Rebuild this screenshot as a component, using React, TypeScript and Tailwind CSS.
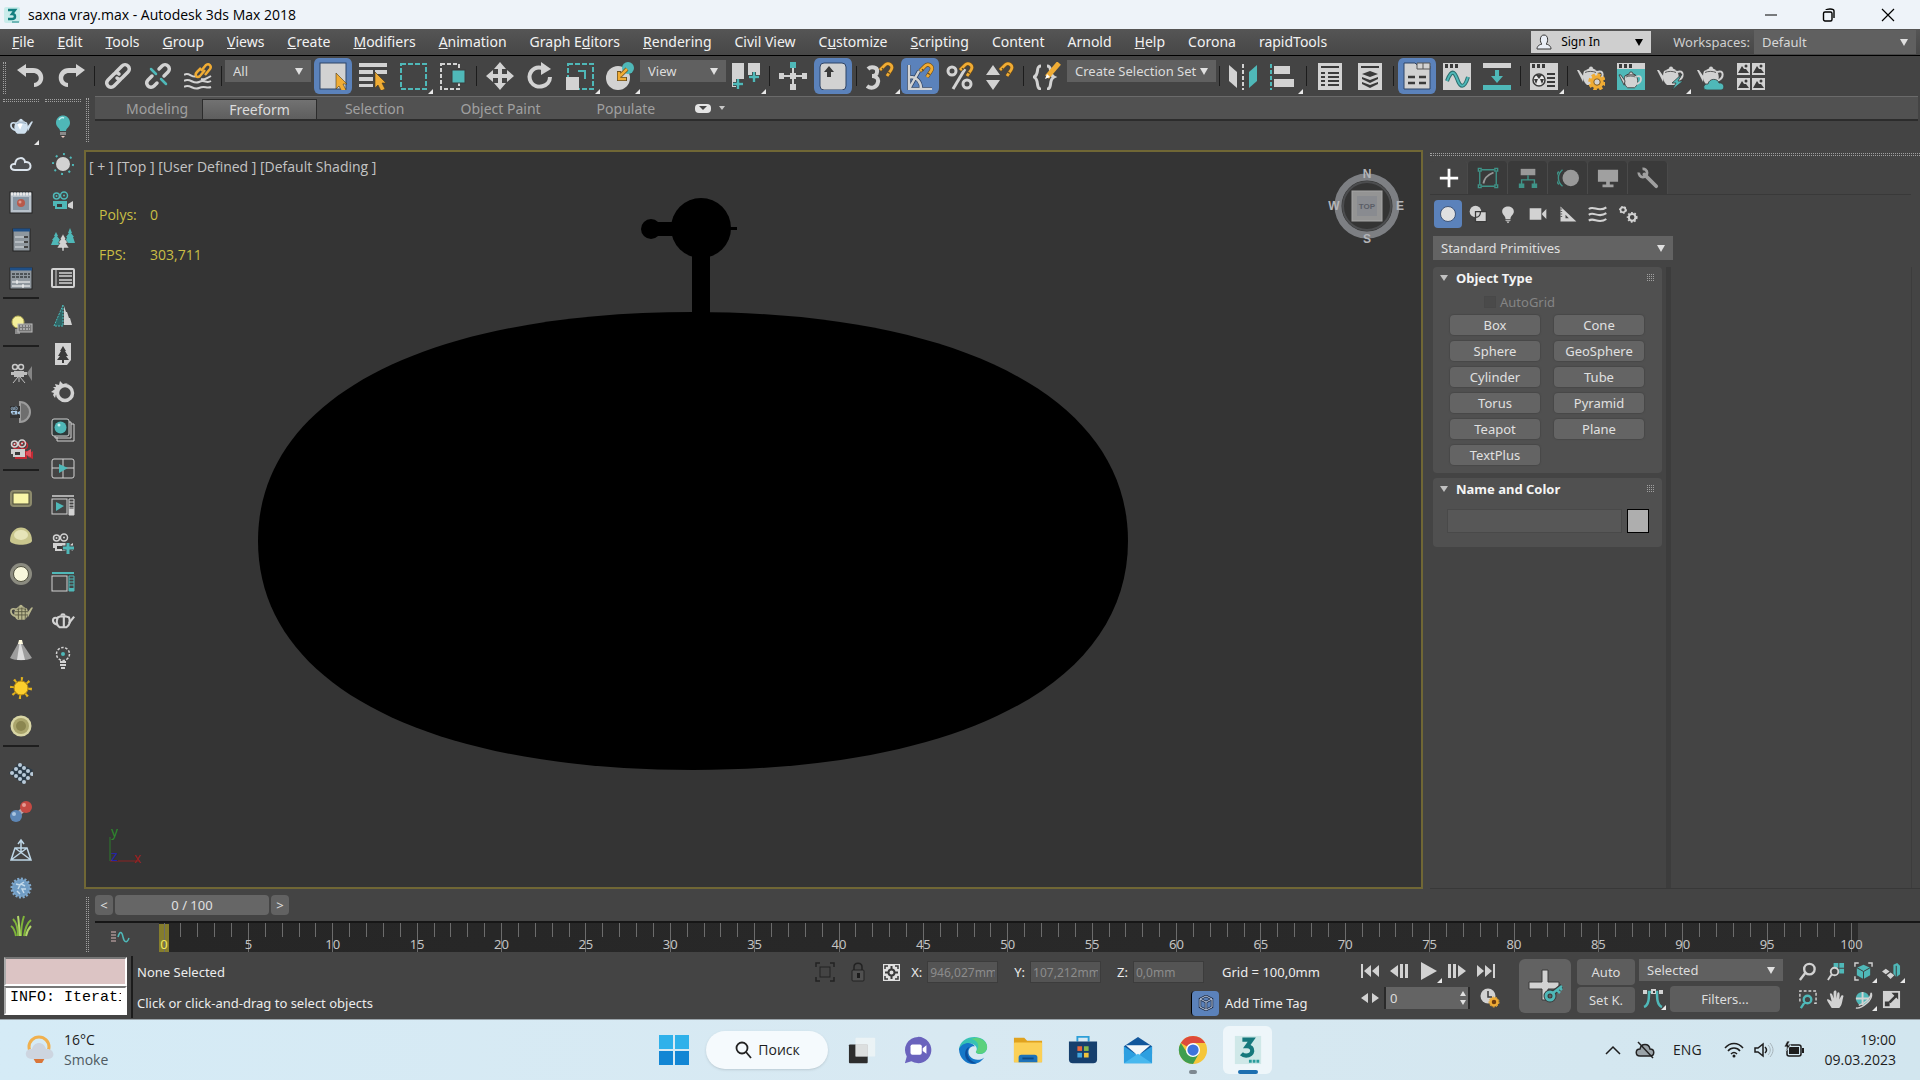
import * as React from "react";
import { clsx } from "clsx";

const L = "#d2d2d2";
const T = "#4fb8b8";
const O = "#f0ac34";
const D = "#3a3a3a";

interface SvgProps {
  size?: number;
  box?: number;
  children: React.ReactNode;
}

function Svg({ size = 28, box = 28, children }: SvgProps) {
  return (
    <svg width={size} height={size} viewBox={`0 0 ${box} ${box}`} fill="none" className="shrink-0" aria-hidden="true">
      {children}
    </svg>
  );
}

/* Shared drawings */

function TeapotShape({ fill = L, stroke = "none", lid = D }: { fill?: string; stroke?: string; lid?: string }) {
  return (
    <g fill={fill} stroke={stroke}>
      <path d="M7 9C11 7 17 7 20 9C23 14 22 20 18 23H10C6 20 5 14 7 9Z" />
      <path d="M12 6.500a2 2 0 0 1 4 0l3 1.500H9Z" />
      <path d="M7 15L2 8H0L6 20Z" />
      <path d="M20 10C27 7 28 16 20 19" fill="none" stroke={fill} strokeWidth="2" />
      <path d="M8 10.500C11 9 16 9 19 10.500" fill="none" stroke={lid} strokeWidth="0.8" />
    </g>
  );
}

function CameraShape({ body = T, reel = T, lens = L }: { body?: string; reel?: string; lens?: string }) {
  return (
    <g>
      <circle cx="5.500" cy="6" r="3" stroke={reel} strokeWidth="1.500" />
      <circle cx="13" cy="5.500" r="3.500" stroke={reel} strokeWidth="1.500" />
      <circle cx="5.500" cy="6" r="1" fill={reel} />
      <circle cx="13" cy="5.500" r="1" fill={reel} />
      <path d="M2 11H16V19H4V16H2Z" fill={body} />
      <rect x="6" y="14" width="5" height="3" fill={D} />
      <path d="M17 14L22 11V19L17 17Z" fill={lens} />
    </g>
  );
}

function Magnet({ x = 0, y = 0 }: { x?: number; y?: number }) {
  return (
    <g transform={`translate(${x} ${y})`}>
      <path d="M0 8L5 3C8 0 14 3 11 8L7 14" stroke="#6b4c1c" strokeWidth="4" />
      <path d="M0 8L5 3C8 0 14 3 11 8L7 14" stroke={O} strokeWidth="2.800" />
      <path d="M2 6L3.500 8M7.500 10L10 11.500" stroke="#5a4a2a" strokeWidth="1.200" />
    </g>
  );
}

function WindowTop({ bg = L }: { bg?: string }) {
  return (
    <g>
      <rect x="0" y="1" width="28" height="27" fill={bg} />
      <rect x="0" y="1" width="28" height="6" fill={L} />
      <path d="M2 2h3v4h-3zM7 2h3v4h-3zM12 2h3v4h-3z" fill={D} />
    </g>
  );
}

const cursor = <path d="M0 0L11 11H7L10 17L6 19L3 13L0 16Z" fill={O} stroke="#4a3a1a" strokeWidth="0.6" />;

const toolIcons: Record<string, React.ReactNode> = {
  undo: <path d="M0 8L9 2V6H16C29 6 30 24 17 25V21C24 20 23 11 16 11H9V15Z" fill={L} />,
  redo: <path d="M28 8L19 2V6H12C-1 6 -2 24 11 25V21C4 20 5 11 12 11H19V15Z" fill={L} />,
  link: (
    <g stroke={L} strokeWidth="3.500" strokeLinecap="round">
      <path d="M12 10L18 4C22 0 28 6 24 10L18 16C16 18 14 17 13 16" />
      <path d="M16 18L10 24C6 28 0 22 4 18L10 12C12 10 14 11 15 12" />
    </g>
  ),
  unlink: (
    <g strokeWidth="3.500" strokeLinecap="round">
      <path d="M15 7L18 4C22 0 28 6 24 10L20 14" stroke={L} />
      <path d="M13 21L10 24C6 28 0 22 4 18L8 14" stroke={L} />
      <path d="M7 7L12 12M17 17L22 22" stroke={T} strokeWidth="2.500" />
    </g>
  ),
  bind: (
    <g>
      <path d="M0 13C5 9 8 17 13 14M17 17C20 18 22 17 27 14M0 19C6 15 9 23 15 20S22 22 27 19M0 25C6 21 9 29 15 26S22 27 27 25" stroke={L} strokeWidth="2" />
      <path d="M17 9L22 3C25 1 28 4 26 7L21 13" stroke={O} strokeWidth="2.500" />
      <path d="M21 8L16 14C13 17 10 13 13 10L17 6" stroke={O} strokeWidth="2.500" />
    </g>
  ),
  select: (
    <g>
      <rect x="1" y="1" width="26" height="26" fill={L} stroke="#2f4467" />
      <g transform="translate(17 11)">{cursor}</g>
    </g>
  ),
  byName: (
    <g>
      <path d="M0 1h28v4h-28zM0 8h14v4h-14zM0 15h14v4h-14zM0 22h14v3h-14zM16 8h12v4h-12z" fill={L} />
      <g transform="translate(16 10)">{cursor}</g>
    </g>
  ),
  rect: <rect x="2" y="2" width="25" height="25" stroke={T} strokeWidth="2" strokeDasharray="5 2" />,
  crossing: (
    <g>
      <rect x="2" y="2" width="18" height="25" stroke={L} strokeWidth="2" strokeDasharray="4 2" />
      <rect x="13" y="8" width="13" height="13" fill={T} stroke={D} />
    </g>
  ),
  move: <path d="M14 0L20 7H16V12H21V8L28 14L21 20V16H16V21H20L14 28L8 21H12V16H7V20L0 14L7 8V12H12V7H8Z" fill={L} />,
  rotate: (
    <g>
      <path d="M17 6C6 3 1 13 5 20C10 28 24 25 24 15" stroke={L} strokeWidth="4" />
      <path d="M15 0L25 7L15 13Z" fill={L} />
    </g>
  ),
  scale: (
    <g>
      <rect x="2" y="2" width="25" height="25" stroke={T} strokeWidth="2" strokeDasharray="5 2" />
      <rect x="0" y="15" width="13" height="13" fill={L} />
      <path d="M12 9H19V17" stroke={T} strokeWidth="2" />
    </g>
  ),
  place: (
    <g>
      <circle cx="12" cy="16" r="12" fill={L} />
      <circle cx="22" cy="6" r="6" fill={T} />
      <path d="M21 7L14 14M13 9V17H21" stroke="#6b5120" strokeWidth="4" />
      <path d="M21 7L14 14M13 10V17H20" stroke={O} strokeWidth="2.500" />
    </g>
  ),
  pivot: (
    <g>
      <path d="M0 1H12V17H8V25H0ZM16 1H28V13H16Z" fill={L} />
      <path d="M6 17V27M1 22H11M22 10V20M17 15H27" stroke={D} strokeWidth="4" />
      <path d="M6 17V27M1 22H11M22 10V20M17 15H27" stroke={T} strokeWidth="2.500" />
    </g>
  ),
  manip: (
    <g>
      <path d="M14 6V25M2 14H26" stroke={L} strokeWidth="2" />
      <path d="M11 11h6v6h-6zM0 11h5v6h-5zM23 11h5v6h-5zM11 22h6v6h-6z" fill={L} />
      <rect x="11" y="0" width="6" height="6" fill={T} />
    </g>
  ),
  keyboard: (
    <g>
      <rect x="1" y="1" width="26" height="27" rx="4" fill={L} stroke="#2f4467" />
      <path d="M10 4L15 10H12V15H8V10H5Z" fill={D} />
    </g>
  ),
  snap: (
    <g>
      <path d="M2 7C5 4 12 5 11 10C11 13 8 14 6 14C9 14 13 16 12 20C11 26 5 27 1 24" stroke={L} strokeWidth="4" />
      <Magnet x={14} />
    </g>
  ),
  angle: (
    <g>
      <path d="M3 3V27H26M3 27L13 9M4 15C11 15 15 20 15 27" stroke="#2f4467" strokeWidth="4" />
      <path d="M3 3V27H26M3 27L13 9M4 15C11 15 15 20 15 27" stroke={L} strokeWidth="2.500" />
      <Magnet x={14} y={1} />
    </g>
  ),
  percent: (
    <g>
      <circle cx="6" cy="9" r="4" stroke={L} strokeWidth="3" />
      <circle cx="21" cy="22" r="4" stroke={L} strokeWidth="3" />
      <path d="M19 7L7 27" stroke={L} strokeWidth="3" />
      <Magnet x={14} />
    </g>
  ),
  spinner: (
    <g>
      <path d="M7 3L14 13H0ZM0 18H14L7 28Z" fill={L} />
      <Magnet x={14} />
    </g>
  ),
  braces: (
    <g>
      <path d="M8 4C2 4 7 12 1 15C7 18 2 27 8 27M14 4C20 4 15 12 21 15C15 18 20 27 14 27" stroke={L} strokeWidth="3" />
      <path d="M14 15L26 1" stroke={O} strokeWidth="5" />
      <path d="M14 12L12 17L17 15Z" fill="#fff" />
    </g>
  ),
  mirror: (
    <g>
      <path d="M0 3L8 10V26L0 19Z" fill={L} />
      <path d="M28 3L20 10V26L28 19Z" fill={T} />
      <path d="M14 2V28" stroke={L} strokeWidth="2" strokeDasharray="4 2" />
    </g>
  ),
  align: (
    <g>
      <path d="M2 2V28" stroke={T} strokeWidth="2" strokeDasharray="4 2" />
      <path d="M5 4h16v8h-16zM5 17h20v8h-20z" fill={L} />
    </g>
  ),
  layers: (
    <g>
      <rect x="2" y="1" width="24" height="27" fill={L} />
      <path d="M5 5H23M5 11H9M12 11H23M5 15H9M12 15H23M5 19H9M12 19H23M5 23H9M12 23H23" stroke={D} strokeWidth="2" />
    </g>
  ),
  stack: (
    <g>
      <rect x="2" y="1" width="24" height="27" fill={L} />
      <path d="M5 5H23" stroke={D} strokeWidth="2" />
      <path d="M14 9L22 12L14 15L6 12ZM6 15L14 18L22 15V17L14 21L6 17ZM6 20L14 23L22 20V22L14 26L6 22Z" fill={D} />
    </g>
  ),
  ribbon: (
    <g>
      <path d="M1 1H12L15 4H27V27H1Z" fill={L} stroke="#2f4467" />
      <path d="M14 1H27V7H14ZM20 1V7" stroke="#555" fill={L} />
      <path d="M5 15H12M16 15H23M5 21H12M16 21H23" stroke={D} strokeWidth="2.500" />
    </g>
  ),
  curve: (
    <g>
      <WindowTop />
      <path d="M4 19C10 3 13 14 15 19S21 28 25 15" stroke="#2c6f6f" strokeWidth="4" />
      <path d="M4 19C10 3 13 14 15 19S21 28 25 15" stroke={T} strokeWidth="2" />
    </g>
  ),
  schematic: (
    <g>
      <path d="M0 1h28v5h-28z" fill={L} />
      <path d="M0 23h28v5h-28zM12 8h4v6h4l-6 7l-6 -7h4z" fill={T} />
    </g>
  ),
  material: (
    <g>
      <WindowTop />
      <circle cx="9" cy="18" r="6" fill="#e8e8e8" stroke={D} strokeWidth="1.500" />
      <path d="M6 13L9 17L12 13ZM4 17H8L6 22ZM14 17H10L12 22Z" fill={D} />
      <path d="M17 12H25M17 16H25M17 20H25M17 24H25" stroke={D} strokeWidth="2" />
    </g>
  ),
  renderSetup: (
    <g>
      <TeapotShape />
      <circle cx="20" cy="20" r="7.500" stroke={O} strokeWidth="2.500" strokeDasharray="3.500 2.400" />
      <circle cx="20" cy="20" r="5" stroke={O} strokeWidth="3.500" />
      <circle cx="20" cy="20" r="3.200" fill={L} stroke="#8a5c14" />
    </g>
  ),
  frame: (
    <g>
      <WindowTop bg={T} />
      <g transform="translate(2 6) scale(0.86)">
        <TeapotShape stroke={D} />
      </g>
    </g>
  ),
  render: (
    <g>
      <TeapotShape />
      <path d="M25 12L15 21H19L15 28L26 19H21Z" fill={T} stroke={D} strokeWidth="0.800" />
    </g>
  ),
  cloud: (
    <g>
      <TeapotShape />
      <path d="M10 28C5 28 6 21 11 22C12 16 21 16 22 21C28 20 28 28 24 28Z" fill={T} stroke={D} strokeWidth="0.800" />
    </g>
  ),
  gallery: (
    <g>
      {[0, 15].map((x) =>
        [1, 16].map((y) => (
          <g key={`${x}-${y}`} transform={`translate(${x} ${y})`}>
            <rect width="13" height="12" fill={L} />
            <path d="M1 10L5 3L7 6L9 6L12 10Z" fill={D} />
            <circle cx="9" cy="3" r="1.500" fill={D} />
          </g>
        ))
      )}
    </g>
  ),
};

const vrayIcons: Record<string, React.ReactNode> = {
  teapot: (
    <g transform="translate(24 1) scale(-0.86 0.82)">
      <TeapotShape fill="#cfe0ee" lid="#7d93a8" />
      <path d="M12 11C14 10 17 10 18 12L15 18Z" fill="#fff" />
    </g>
  ),
  cloud: <path d="M6 18C0 18 1 11 6 12C7 4 16 5 16 10C23 9 23 18 18 18Z" fill="#4c4f52" stroke="#dbe4ec" strokeWidth="2" />,
  frame: (
    <g>
      <rect x="1" y="2" width="22" height="21" fill="#b9c2cb" stroke="#222" />
      <path d="M2 4H22" stroke="#e8e8e8" strokeWidth="3" strokeDasharray="2 1" />
      <rect x="4" y="7" width="16" height="13" fill="#8796a4" />
      <circle cx="12" cy="13" r="4" fill="#b8594a" />
      <circle cx="11" cy="12" r="1.500" fill="#dc9a90" />
    </g>
  ),
  list: (
    <g>
      <rect x="4" y="1" width="17" height="22" fill="#8f979e" stroke="#222" />
      <path d="M4 2H21" stroke="#1f4f86" strokeWidth="3" />
      <path d="M6 9H19M6 14H19M6 19H19" stroke="#d8dde1" />
      <path d="M15 9H19M15 14H19M15 19H19" stroke="#444" strokeWidth="2" />
    </g>
  ),
  sliders: (
    <g>
      <rect x="1" y="2" width="22" height="21" fill="#8f979e" stroke="#222" />
      <path d="M1 3H23" stroke="#1f4f86" strokeWidth="3" />
      <path d="M3 8H21M3 11H21" stroke="#4d5357" strokeWidth="2" strokeDasharray="3 1" />
      <path d="M3 16H21M3 20H21M8 14V18M14 18V22" stroke="#fff" />
    </g>
  ),
  bulbPanel: (
    <g>
      <circle cx="9" cy="8" r="6" fill="#f4ef9a" stroke="#b8b05a" />
      <path d="M6 15h5v5h-5z" fill="#8a8a8a" />
      <rect x="9" y="10" width="14" height="8" fill="#777" stroke="#bbb" />
      <path d="M11 12h10M11 15h10" stroke="#ddd" strokeDasharray="2 1" />
    </g>
  ),
  camera: (
    <g>
      <circle cx="6" cy="5" r="2.500" stroke="#c9c9c9" strokeWidth="1.500" />
      <circle cx="12" cy="5" r="2.500" stroke="#c9c9c9" strokeWidth="1.500" />
      <path d="M5 9h10v6h-10zM2 10h3v3h-3zM15 10h3v3h-3z" fill="#bdbdbd" />
      <path d="M23 4V19L18 11Z" fill="#858585" />
      <path d="M9 15L4 21M10 15V20M11 15L16 21" stroke="#bdbdbd" />
    </g>
  ),
  dome: (
    <g>
      <path d="M11 2A10 10 0 0 1 11 22Z" fill="#6e6e6e" stroke="#9c9c9c" strokeWidth="2" />
      <rect x="1" y="6" width="10" height="12" fill="#333" />
      <g transform="translate(1 6) scale(0.45)">
        <CameraShape body="#a9cbe8" reel="#a9cbe8" lens="#a9cbe8" />
      </g>
    </g>
  ),
  redCamera: (
    <g>
      <g transform="translate(2 2)">
        <CameraShape body="#c22a34" reel="#c22a34" lens="#c22a34" />
      </g>
      <CameraShape body="#cfcfcf" reel="#d5d5d5" lens="#e05560" />
    </g>
  ),
  plane: (
    <g>
      <rect x="1" y="4" width="22" height="17" rx="4" fill="#8d8b6c" />
      <rect x="4" y="7" width="16" height="11" fill="#f9f6a8" stroke="#4a4a35" />
    </g>
  ),
  domeLight: (
    <g>
      <path d="M1 17C1 -1 23 -1 23 17C21 22 3 22 1 17Z" fill="#c9c68d" />
      <ellipse cx="12" cy="11" rx="7" ry="5" fill="#e6e4b8" />
    </g>
  ),
  sphereLight: (
    <g>
      <circle cx="12" cy="12" r="11" fill="#8b8b80" />
      <circle cx="12" cy="12" r="7.500" fill="#f8f7dc" stroke="#50503f" />
    </g>
  ),
  meshTeapot: (
    <g transform="translate(24 1) scale(-0.86 0.82)">
      <TeapotShape fill="#b9b78e" lid="#55543e" />
      <path d="M9 9V22M13 8V23M17 9V22M6 13H21M6 17H21" stroke="#55543e" />
    </g>
  ),
  cone: (
    <g>
      <path d="M11 2L23 20C18 23 6 23 1 20Z" fill="#9d9d9d" />
      <path d="M11 2L16 22H8Z" fill="#dcdcdc" />
      <path d="M10 2H13L14 6H9Z" fill="#fffbe0" />
    </g>
  ),
  sun: (
    <g>
      <circle cx="12" cy="12" r="9" stroke="#e2b21c" strokeWidth="4" strokeDasharray="2 5" />
      <circle cx="12" cy="12" r="7" fill="#fbce2c" stroke="#b88a10" />
    </g>
  ),
  disc: (
    <g>
      <circle cx="12" cy="12" r="10.500" fill="#d9d6a5" />
      <circle cx="12" cy="12" r="8" fill="#aaa56c" />
      <circle cx="12" cy="12" r="5" fill="#8b8650" />
    </g>
  ),
  grid: (
    <g>
      <path d="M10 1L24 8L14 22L0 11Z" fill="#2b3b48" />
      <g fill="#b9cad9">
        {[0, 1, 2, 3].map((r) =>
          [0, 1, 2].map((c) => <circle key={`${r}-${c}`} cx={3 + c * 4 + r * 4} cy={11 - c * 4 + r * 3} r="2" />)
        )}
      </g>
    </g>
  ),
  molecule: (
    <g>
      <path d="M7 16L16 8" stroke="#b7a5ad" strokeWidth="5" />
      <circle cx="7" cy="16" r="6" fill="#5d86b5" />
      <circle cx="17" cy="7" r="6" fill="#c44a43" />
      <circle cx="15" cy="5" r="2" fill="#e59a92" />
      <circle cx="5" cy="14" r="2" fill="#a9c5e0" />
    </g>
  ),
  pyramid: (
    <path d="M6 10H18L22 22H2ZM6 10L22 22M18 10L2 22M12 15V3M9 6L12 2L15 6" stroke="#bdd6e6" strokeWidth="1.500" />
  ),
  fur: (
    <g>
      <circle cx="12" cy="12" r="9" fill="#6f9cc4" stroke="#7fa8cc" strokeWidth="3" strokeDasharray="2 1.500" />
      <path d="M7 8L11 9L9 13M15 6L12 8L16 10M17 13L13 13L15 17M8 15L11 18" stroke="#c2d9ea" strokeWidth="1.500" />
    </g>
  ),
  grass: (
    <g strokeWidth="2">
      <path d="M12 22C12 14 13 8 15 2M9 22C9 15 8 9 4 5M15 22C16 15 18 9 22 6M7 22C6 17 5 14 2 12" stroke="#7fb53a" />
      <path d="M11 22C10 14 10 8 9 2M17 22C18 17 20 14 22 12" stroke="#b2d66a" />
    </g>
  ),
};

const coronaIcons: Record<string, React.ReactNode> = {
  bulb: (
    <g>
      <path d="M5 9C5 -1 19 -1 19 9C19 13 15 14 15 17H9C9 14 5 13 5 9Z" fill={T} />
      <path d="M9 18h6v3h-6z" fill="#8a8a8a" />
      <path d="M10 22h4l-2 2z" fill="#e8c8c0" />
      <path d="M8 6C9 4 11 3 13 4" stroke="#bff0ee" strokeWidth="1.500" />
    </g>
  ),
  sun: (
    <g>
      <circle cx="12" cy="12" r="7" fill={L} />
      <circle cx="12" cy="12" r="10" stroke={T} strokeWidth="2" strokeDasharray="2 5.800" />
    </g>
  ),
  camera: <CameraShape />,
  trees: (
    <g>
      <path d="M5 4L7 8H6L9 12H8L10 17H0L2 12H1L4 8H3ZM19 0L21 5H20L23 9H22L24 15H14L16 9H15L18 5H17Z" fill={T} />
      <path d="M12 6L15 11H14L17 15H15L18 20H13V23H11V20H6L9 15H7L10 11H9Z" fill={L} stroke={D} strokeWidth="0.500" />
    </g>
  ),
  table: (
    <g>
      <rect x="1" y="3" width="22" height="18" rx="1" stroke={L} strokeWidth="2" />
      <path d="M5 4V20" stroke={L} />
      <path d="M8 7H21M8 10H21M8 14H21M8 17H21" stroke={L} strokeWidth="1.500" />
    </g>
  ),
  proxy: (
    <g>
      <path d="M12 1V22H3Z" fill="#2f6666" stroke={T} strokeDasharray="2 1" />
      <path d="M13 2L15 8H16L18 14H19L21 21H13Z" fill={L} />
    </g>
  ),
  card: (
    <g>
      <path d="M4 1H20V18L16 23H4Z" fill={L} />
      <path d="M12 4L15 9H14L17 14H15L18 18H13V21H11V18H6L9 14H7L10 9H9Z" fill={D} />
    </g>
  ),
  corona: (
    <g>
      <circle cx="14" cy="13" r="7.500" stroke={L} strokeWidth="3.500" />
      <path d="M4 4L8 5L9 1L12 4L17 3L10 7L6 11L4 18L2 15L3 13L0 12L4 9L2 7L5 7Z" fill={L} />
    </g>
  ),
  library: (
    <g stroke={L}>
      <path d="M6 19V23H23V6H20M4 18V20H20V4H18" />
      <rect x="1" y="1" width="17" height="17" rx="2" fill="#2e3a3a" />
      <circle cx="9.500" cy="9.500" r="6" fill={T} stroke="none" />
      <circle cx="8" cy="7" r="1.500" fill="#c8f2f0" stroke="none" />
    </g>
  ),
  cross: (
    <g>
      <rect x="1" y="3" width="22" height="19" rx="2" stroke={L} />
      <path d="M12 3V22M1 12H23" stroke={L} />
      <path d="M8 8L17 12L8 17Z" fill={T} />
    </g>
  ),
  play: (
    <g>
      <path d="M1 2H23" stroke={L} strokeWidth="1.500" />
      <rect x="1" y="5" width="15" height="15" stroke={L} />
      <path d="M5 8L13 12L5 17Z" fill={T} />
      <path d="M18 5h5v16h-5zM18 8h5M18 11h5M18 14h5" stroke={L} />
      <path d="M18 15h5v6h-5z" fill={L} />
    </g>
  ),
  cameraPlus: (
    <g>
      <CameraShape body={L} reel={L} />
      <path d="M17 10V22M11 16H23" stroke="#444" strokeWidth="5" />
      <path d="M17 11V22M12 16H23" stroke={T} strokeWidth="3" />
    </g>
  ),
  panel: (
    <g>
      <path d="M1 3H23" stroke={T} strokeWidth="2" />
      <rect x="1" y="6" width="15" height="15" stroke={L} />
      <path d="M18 6h5v15h-5zM18 9h5M18 12h5M18 15h5" stroke={T} />
      <path d="M18 18h5v3h-5z" fill={T} />
    </g>
  ),
  wireTeapot: (
    <g transform="translate(24 2) scale(-0.86 0.82)">
      <path d="M7 9C11 7 17 7 20 9C22 14 22 18 18 21H10C6 18 5 14 7 9ZM13 8V21" stroke={L} strokeWidth="2.500" />
      <path d="M12 7a2 2 0 0 1 4 0" stroke={L} strokeWidth="2" />
      <path d="M7 16L1 8M20 10C27 7 28 16 20 18" stroke={L} strokeWidth="2.500" />
    </g>
  ),
  dotBulb: (
    <g>
      <circle cx="12" cy="8" r="6.500" stroke={L} strokeWidth="1.500" strokeDasharray="2.500 1.500" />
      <circle cx="12" cy="8" r="2" fill={T} />
      <path d="M9 16H15M9 19H15M10 22H14" stroke={L} strokeWidth="2" />
    </g>
  ),
};

/* Small controls */

function Sep() {
  return <div className="mx-[3px] mt-2 h-5 w-px shrink-0 bg-[#1c1c1c]" />;
}

function Corner() {
  return <span className="absolute right-0 bottom-0 border-b-[5px] border-l-[5px] border-b-[#e8e8e8] border-l-transparent" />;
}

function Tool({ name, active, more }: { name: string; active?: boolean; more?: boolean }) {
  return (
    <button
      type="button"
      aria-label={name}
      className={clsx("relative flex h-9 w-10 shrink-0 items-center justify-center bg-clip-content px-px", active && "rounded-md bg-[#5b82bb]")}
    >
      <Svg>{toolIcons[name]}</Svg>
      {more && <Corner />}
    </button>
  );
}

function Dropdown({ label, value, className, dark }: { label: string; value: string; className?: string; dark?: boolean }) {
  return (
    <div className={clsx("relative flex shrink-0 items-center", className)}>
      <select aria-label={label} defaultValue={value} className="h-full w-full appearance-none bg-transparent pr-4 pl-2 text-inherit outline-none">
        <option>{value}</option>
      </select>
      <span
        className={clsx(
          "pointer-events-none absolute right-2 border-x-4 border-t-[7px] border-x-transparent",
          dark ? "border-t-black" : "border-t-[#e0e0e0]"
        )}
      />
    </div>
  );
}

/* Each menu with the index of its underlined letter, -1 for none */
const menus: [string, number][] = [
  ["File", 0],
  ["Edit", 0],
  ["Tools", 0],
  ["Group", 0],
  ["Views", 0],
  ["Create", 0],
  ["Modifiers", 0],
  ["Animation", 0],
  ["Graph Editors", 7],
  ["Rendering", 0],
  ["Civil View", -1],
  ["Customize", 1],
  ["Scripting", 0],
  ["Content", -1],
  ["Arnold", -1],
  ["Help", 0],
  ["Corona", -1],
  ["rapidTools", -1],
];

function TitleBar() {
  return (
    <header className="flex h-[29px] items-center bg-[#eef3f9] pr-0.5 pl-1 font-['Open_Sans','Noto_Sans',sans-serif] text-sm text-black">
      <Svg size={16} box={16}>
        <rect width="16" height="16" rx="2" fill="#c9eceb" />
        <path d="M4 3H11L8 7C12 7 12 12 8 12H4" stroke="#128080" strokeWidth="2.500" />
        <path d="M8 15H15" stroke="#128080" />
      </Svg>
      <h1 className="ml-2 flex-1">saxna vray.max - Autodesk 3ds Max 2018</h1>
      <button type="button" aria-label="Minimize" className="flex w-[58px] justify-center">
        <Svg size={14} box={14}>
          <path d="M1 7H13" stroke="#000" />
        </Svg>
      </button>
      <button type="button" aria-label="Restore" className="flex w-[58px] justify-center">
        <Svg size={14} box={14}>
          <rect x="1.500" y="4" width="8.500" height="9" rx="1.500" stroke="#000" strokeWidth="1.400" />
          <path d="M4 2C4 1 12 0 12 3V10" stroke="#000" strokeWidth="1.400" />
        </Svg>
      </button>
      <button type="button" aria-label="Close" className="flex w-[60px] justify-center">
        <Svg size={14} box={14}>
          <path d="M1 1L13 13M13 1L1 13" stroke="#000" strokeWidth="1.200" />
        </Svg>
      </button>
    </header>
  );
}

function MenuBar() {
  return (
    <nav className="flex h-[27px] items-center border-b border-black bg-linear-to-b from-[#555] to-[#474747] text-[#f2f2f2]">
      {menus.map(([name, key]) => (
        <button key={name} type="button" className="pr-[11px] pl-3 text-sm whitespace-nowrap">
          {key < 0 ? (
            name
          ) : (
            <>
              {name.slice(0, key)}
              <u>{name[key]}</u>
              {name.slice(key + 1)}
            </>
          )}
        </button>
      ))}
      <div className="flex-1" />
      <div className="flex h-[22px] w-[120px] items-center bg-[#cfcfcf] pl-1 text-black">
        <Svg size={18} box={18}>
          <path d="M9 2C4 2 5 10 7 11C3 12 2 14 2 16H16C16 14 15 12 11 11C13 10 14 2 9 2Z" fill="#e9eef6" stroke="#333" />
        </Svg>
        <Dropdown label="Sign In" value="Sign In" dark className="h-full flex-1 text-xs" />
      </div>
      <span className="ml-[22px] text-[#cfcfcf]">Workspaces:</span>
      <Dropdown label="Workspaces" value="Default" className="mr-1 ml-1 h-6 w-[162px] bg-[#606060] text-[#d8d8d8]" />
    </nav>
  );
}

function Toolbar() {
  return (
    <div className="flex h-10 items-start bg-[#444] pt-0.5 text-[#dcdcdc]">
      <div className="mt-1 mr-[5px] ml-[3px] h-8 w-[3px] border-x border-dotted border-[#a0a0a0]" />
      <Tool name="undo" />
      <Tool name="redo" />
      <Sep />
      <Tool name="link" />
      <Tool name="unlink" />
      <Tool name="bind" />
      <Sep />
      <Dropdown label="Selection filter" value="All" className="mt-0.5 mr-0.5 h-[22px] w-[86px] bg-[#606060]" />
      <Tool name="select" active />
      <Tool name="byName" />
      <Tool name="rect" more />
      <Tool name="crossing" />
      <Sep />
      <Tool name="move" />
      <Tool name="rotate" />
      <Tool name="scale" more />
      <Tool name="place" more />
      <Dropdown label="Reference coordinate system" value="View" className="mt-0.5 h-[22px] w-[86px] bg-[#606060]" />
      <Tool name="pivot" more />
      <Sep />
      <Tool name="manip" />
      <Tool name="keyboard" active />
      <Sep />
      <Tool name="snap" more />
      <Tool name="angle" active />
      <Tool name="percent" />
      <Tool name="spinner" />
      <Sep />
      <Tool name="braces" />
      <Dropdown label="Named selection sets" value="Create Selection Set" className="mt-0.5 h-[22px] w-[149px] bg-[#606060]" />
      <Sep />
      <Tool name="mirror" />
      <Tool name="align" more />
      <Sep />
      <Tool name="layers" />
      <Tool name="stack" />
      <Sep />
      <Tool name="ribbon" active />
      <Tool name="curve" />
      <Tool name="schematic" />
      <Sep />
      <Tool name="material" more />
      <Sep />
      <Tool name="renderSetup" />
      <Tool name="frame" />
      <Tool name="render" more />
      <Tool name="cloud" />
      <Tool name="gallery" />
    </div>
  );
}

const vrayGroups = [
  ["teapot", "cloud", "frame", "list", "sliders"],
  ["bulbPanel"],
  ["camera", "dome", "redCamera"],
  ["plane", "domeLight", "sphereLight", "meshTeapot", "cone", "sun", "disc"],
  ["grid", "molecule", "pyramid", "fur", "grass"],
];

function SideTool({ name, more, children }: { name: string; more?: boolean; children: React.ReactNode }) {
  return (
    <button type="button" aria-label={name} className="relative flex h-[38px] w-full items-center justify-center">
      <Svg size={24} box={24}>
        {children}
      </Svg>
      {more && <Corner />}
    </button>
  );
}

function SideBars() {
  return (
    <aside className="flex shrink-0 gap-1.5 pt-[3px] pr-[3px] pl-[3px]">
      <div className="w-9">
        <div className="mb-[5px] h-[3px] border-y border-dotted border-[#a0a0a0]" />
        {vrayGroups.map((group, i) => (
          <div key={i} className={clsx(i > 0 && "border-t-2 border-[#1e1e1e] pt-2")}>
            {group.map((name) => (
              <SideTool key={name} name={name} more={name === "teapot"}>
                {vrayIcons[name]}
              </SideTool>
            ))}
          </div>
        ))}
      </div>
      <div className="w-9">
        <div className="mb-[5px] h-[3px] border-y border-dotted border-[#a0a0a0]" />
        {Object.entries(coronaIcons).map(([name, icon]) => (
          <SideTool key={name} name={name}>
            {icon}
          </SideTool>
        ))}
      </div>
    </aside>
  );
}

const ribbonTabs: [string, string][] = [
  ["Modeling", "pr-3.5 pl-[30px]"],
  ["Freeform", "border-x border-t border-[#2c2c2c] bg-linear-to-b from-[#727272] to-[#5e5e5e] px-[26px] text-[#dcdcdc]"],
  ["Selection", "px-7"],
  ["Object Paint", "px-7"],
  ["Populate", "px-7"],
];

function Ribbon() {
  return (
    <div className="flex h-[54px] pl-0.5">
      <div className="mt-0.5 mr-1.5 h-11 w-[3px] shrink-0 border-x border-dotted border-[#a0a0a0]" />
      <div className="mr-0.5 flex h-[25px] flex-1 items-stretch border-t border-b-2 border-t-[#6a6a6a] border-b-[#2c2c2c] bg-[#515151] pl-px text-sm text-[#a0a0a0]">
        {ribbonTabs.map(([tab, look]) => (
          <button key={tab} type="button" className={clsx("mt-0.5 whitespace-nowrap", look)}>
            {tab}
          </button>
        ))}
        <button type="button" aria-label="Ribbon state" className="ml-3 flex items-center gap-2">
          <span className="flex h-[9px] w-4 items-center justify-center rounded-sm bg-[#e4e4e4]">
            <span className="border-x-4 border-t-4 border-x-transparent border-t-[#444]" />
          </span>
          <span className="border-x-[3px] border-t-4 border-x-transparent border-t-[#c8c8c8]" />
        </button>
      </div>
    </div>
  );
}

function Viewport() {
  return (
    <section className="relative min-w-0 flex-1 border-2 border-[#706735] bg-[#343434] font-['Open_Sans','Noto_Sans',sans-serif]">
      <svg className="absolute inset-0 h-full w-full" viewBox="86 152 1335 735" aria-hidden="true">
        <path d="M258 541C258 399 423 312 693 312S1128 399 1128 541S963 770 693 770S258 683 258 541Z" fill="#000" />
        <circle cx="701" cy="228" r="30" fill="#000" />
        <circle cx="651" cy="229" r="10" fill="#000" />
        <path d="M692 250h18v70h-18zM651 222h30v14h-30zM730 227h7v3h-7z" fill="#000" />
      </svg>
      <div className="relative flex h-full flex-col justify-between">
        <div className="flex justify-between">
          <div>
            <p className="mt-[5px] ml-[3px] text-sm text-[#c4c4c4]">[ + ] [Top ] [User Defined ] [Default Shading ]</p>
            <dl className="mt-7 ml-[13px] grid grid-cols-[51px_auto] gap-y-5 text-sm text-[#c9bf45]">
              <dt>Polys:</dt>
              <dd>0</dd>
              <dt>FPS:</dt>
              <dd>303,711</dd>
            </dl>
          </div>
          <svg width="84" height="84" viewBox="0 0 84 84" className="mt-3 mr-3" role="img" aria-label="ViewCube">
            <circle cx="42" cy="42" r="29" fill="none" stroke="#7d7f83" strokeWidth="7" />
            <circle cx="42" cy="42" r="24" fill="none" stroke="#4c4d4f" strokeWidth="2" />
            <rect x="27" y="27" width="30" height="30" fill="#949494" stroke="#a6a6a6" />
            <rect x="32" y="32" width="20" height="20" fill="#898b90" />
            <g fill="#b4b5b8" fontFamily="Liberation Sans, sans-serif" fontWeight="700" fontSize="12" textAnchor="middle">
              <text x="42" y="14">N</text>
              <text x="42" y="79">S</text>
              <text x="9" y="46">W</text>
              <text x="75" y="46">E</text>
              <text x="42" y="45" fontSize="8" fill="#5a5d66">
                TOP
              </text>
            </g>
          </svg>
        </div>
        <svg width="40" height="46" viewBox="0 0 40 46" className="mb-5 ml-5" aria-hidden="true">
          <path d="M4 16V40" stroke="#2c7a2c" />
          <path d="M4 40H34" stroke="#8a2222" />
          <g fontFamily="Liberation Sans, sans-serif" fontSize="14">
            <text x="5" y="16" fill="#2c8a2c">y</text>
            <text x="28" y="42" fill="#9a2020">x</text>
            <text x="5" y="40" fill="#2424a8">z</text>
          </g>
        </svg>
      </div>
    </section>
  );
}

const panelTabs: [string, React.ReactNode][] = [
  ["Create", <path key="p" d="M12 2V22M2 12H22" stroke="#fff" strokeWidth="3" />],
  [
    "Modify",
    <g key="p" stroke="#3f9488" strokeWidth="1.500">
      <path d="M5 3H19M3 5V19M21 5V19M5 21H19" />
      <path d="M1.500 1.500h3v3h-3zM19.500 1.500h3v3h-3zM1.500 19.500h3v3h-3zM19.500 19.500h3v3h-3z" />
      <path d="M7 18C8 11 13 8 18 6" stroke="#999" strokeWidth="2" />
    </g>,
  ],
  [
    "Hierarchy",
    <g key="p">
      <path d="M4 2h16v7h-16z" fill="#999" />
      <path d="M12 9V14M5 19V14H19V19" stroke="#3f9488" strokeWidth="1.500" />
      <path d="M2 18h6v5h-6zM16 18h6v5h-6z" fill="#3f9488" />
    </g>,
  ],
  [
    "Motion",
    <g key="p">
      <circle cx="15" cy="12" r="9" fill="#999" />
      <path d="M6 3C0 8 0 16 6 21M2 5C-2 9 -2 15 2 19" stroke="#3f9488" strokeWidth="1.500" />
    </g>,
  ],
  ["Display", <path key="p" d="M1 3h22v13h-22zM10 16h4v3h-4zM6 19h12v3h-12z" fill="#a0a0a0" />],
  [
    "Utilities",
    <g key="p">
      <path d="M8 8L21 21" stroke="#a0a0a0" strokeWidth="4" strokeLinecap="round" />
      <path d="M6 2A4.500 4.500 0 1 1 2 6" stroke="#a0a0a0" strokeWidth="3" />
    </g>,
  ],
];

const createKinds: [string, React.ReactNode][] = [
  ["Geometry", <circle key="k" cx="12" cy="12" r="9" fill="#e0e0e0" stroke="#2f4467" />],
  [
    "Shapes",
    <g key="k">
      <circle cx="9" cy="9" r="7" fill={L} />
      <path d="M9 9h13v12h-13z" fill={L} stroke={D} strokeWidth="1.500" />
      <path d="M9 16C14 16 15 13 15 9" stroke={D} strokeWidth="1.500" />
    </g>,
  ],
  [
    "Lights",
    <g key="k" fill={L}>
      <path d="M5 9C5 1 19 1 19 9C19 13 15 14 15 18H9C9 14 5 13 5 9Z" />
      <path d="M9 19h6v1h-6zM10 21h4l-2 2z" />
    </g>,
  ],
  ["Cameras", <path key="k" d="M2 5h14v14h-14zM17 11L22 6V18L17 13Z" fill={L} />],
  [
    "Helpers",
    <g key="k">
      <path d="M3 3L22 21H3Z" fill={L} />
      <path d="M9 13V17H13Z" fill="#444" />
      <path d="M3 6H5M3 9H5M3 12H5M3 15H5" stroke="#444" />
    </g>,
  ],
  ["Space Warps", <path key="k" d="M1 6C7 1 12 11 22 4M1 13C7 8 12 18 22 11M1 20C7 15 12 25 22 18" stroke={L} strokeWidth="2.500" />],
  [
    "Systems",
    <g key="k">
      <circle cx="6" cy="7" r="3" stroke={L} strokeWidth="2" />
      <circle cx="6" cy="7" r="4" stroke={L} strokeWidth="1.500" strokeDasharray="2 2" />
      <circle cx="17" cy="16" r="4" stroke={L} strokeWidth="2.500" />
      <circle cx="17" cy="16" r="5.500" stroke={L} strokeWidth="2" strokeDasharray="2 2" />
    </g>,
  ],
];

const primitives = ["Box", "Cone", "Sphere", "GeoSphere", "Cylinder", "Tube", "Torus", "Pyramid", "Teapot", "Plane", "TextPlus"];

function Rollout({ title, children }: { title: string; children: React.ReactNode }) {
  return (
    <section className="rounded-sm bg-[#505050]">
      <h2 className="flex h-[22px] items-center px-[7px] font-bold text-[#f4f4f4]">
        <span className="mr-2 border-x-4 border-t-[6px] border-x-transparent border-t-[#c0c0c0]" />
        <span className="flex-1">{title}</span>
        <Svg size={8} box={8}>
          <path d="M0 .5H8M0 2.500H8M0 4.500H8M0 6.500H8" stroke="#a0a0a0" strokeDasharray="1 1" />
        </Svg>
      </h2>
      {children}
    </section>
  );
}

function CommandPanel() {
  return (
    <aside className="flex w-[497px] shrink-0 flex-col pl-[7px]">
      <div className="mt-[3px] h-[3px] border-y border-dotted border-[#a0a0a0]" />
      <div className="mt-[5px] mr-[9px] flex border-b border-[#393939]">
        {panelTabs.map(([name, icon], i) => (
          <button
            key={name}
            type="button"
            aria-label={name}
            className={clsx("flex h-[33px] items-center justify-center rounded-t-sm border-r border-[#4a4a4a]", i > 0 ? "w-10 bg-[#3a3a3a]" : "w-[38px] bg-[#444]")}
          >
            <Svg size={22} box={24}>
              {icon}
            </Svg>
          </button>
        ))}
      </div>
      <div className="mt-[5px] ml-1 flex gap-0.5">
        {createKinds.map(([name, icon], i) => (
          <button key={name} type="button" aria-label={name} className={clsx("flex size-7 items-center justify-center rounded-sm", i === 0 && "bg-[#5b82bb]")}>
            <Svg size={20} box={24}>
              {icon}
            </Svg>
          </button>
        ))}
      </div>
      <Dropdown label="Category" value="Standard Primitives" className="mt-2 ml-[3px] h-6 w-60 bg-[#636363] text-[#e0e0e0]" />
      <div className="mt-[7px] flex flex-1 border-b border-[#383838]">
        <div className="ml-[3px] flex w-[229px] flex-col gap-[5px] text-[#e0e0e0]">
          <Rollout title="Object Type">
            <label className="ml-[51px] flex h-[26px] items-center gap-1 text-[#858585]">
              <input type="checkbox" className="size-3 appearance-none border border-[#484848] bg-[#4a4a4a]" />
              AutoGrid
            </label>
            <div className="grid grid-cols-[90px_90px] gap-x-3.5 gap-y-1.5 px-[17px] pb-2">
              {primitives.map((name) => (
                <button key={name} type="button" className="h-5 rounded-sm bg-[#646464] shadow-[0_0_1px_1px_#484848]">
                  {name}
                </button>
              ))}
            </div>
          </Rollout>
          <Rollout title="Name and Color">
            <div className="flex items-center gap-[5px] pt-[9px] pr-[13px] pb-3.5 pl-3.5">
              <input aria-label="Object name" className="h-6 min-w-0 flex-1 border border-[#494949] bg-[#575757] px-1" />
              <button type="button" aria-label="Object color" className="h-6 w-[22px] border border-black bg-[#aeaeae]" />
            </div>
          </Rollout>
        </div>
        <div className="ml-1 w-[5px] bg-[#3c3c3c]" />
        <div className="mr-2 flex-1 border-r border-[#3c3c3c]" />
      </div>
    </aside>
  );
}

function TimeTrack() {
  return (
    <div className="flex pl-0.5">
      <div className="mt-2 mr-1.5 w-[3px] border-x border-dotted border-[#a0a0a0]" />
      <div className="flex-1">
        <div className="flex h-8 gap-0.5 pt-1.5 text-[#e0e0e0]">
          <button type="button" aria-label="Previous frame" className="h-5 w-[18px] rounded-sm bg-[#626262]">
            &lt;
          </button>
          <button type="button" className="h-5 w-[154px] rounded-sm bg-[#666]">
            0 / 100
          </button>
          <button type="button" aria-label="Next frame" className="h-5 w-[18px] rounded-sm bg-[#626262]">
            &gt;
          </button>
        </div>
        <div className="flex h-[31px] border-t-2 border-[#161616]">
          <button type="button" aria-label="Open mini curve editor" className="flex w-16 items-center pl-4">
            <Svg size={19} box={19}>
              <path d="M0 4H5M0 7H5M0 10H5M0 13H5" stroke="#d8b8b8" />
              <path d="M7 9C9 2 11 4 12 9S16 16 18 10" stroke={T} strokeWidth="1.500" />
            </Svg>
          </button>
          <div className="mr-[62px] flex flex-1 justify-between bg-linear-to-r from-[#262626] to-[#2b2b2b] pr-1.5 pl-[5px]">
            {Array.from({ length: 101 }, (_, i) => (
              <div key={i} className="relative flex w-0 justify-center">
                {i === 0 && <span className="absolute top-px h-7 w-2.5 bg-[#857d2c]" />}
                <span className={clsx("absolute top-0 w-px bg-[#6c6c6c]", i % 5 === 0 ? "h-full" : "h-3.5")} />
                {i % 5 === 0 && (
                  <span className={clsx("absolute bottom-0 leading-4", i === 0 ? "text-[#f0e860]" : "text-[#c4c4c4]")}>{i}</span>
                )}
              </div>
            ))}
          </div>
        </div>
      </div>
    </div>
  );
}

function Coord({ axis, value }: { axis: string; value: string }) {
  return (
    <label className="flex items-center gap-[5px] text-[#ececec]">
      {axis}:
      <input defaultValue={value} className="h-[22px] w-[71px] border border-[#3c3c3c] bg-[#545454] px-0.5 text-xs text-[#8c8c8c] outline-none" />
    </label>
  );
}

function PlayButton({ label, d, more }: { label: string; d: string; more?: boolean }) {
  return (
    <button type="button" aria-label={label} className="relative flex h-6 w-[29px] items-center justify-center">
      <Svg size={20} box={20}>
        <path d={d} fill={L} />
      </Svg>
      {more && <Corner />}
    </button>
  );
}

const navIcons: [string, boolean, React.ReactNode][] = [
  ["Zoom", false, <path key="n" d="M12 2A5.500 5.500 0 1 1 12 13A5.500 5.500 0 1 1 12 2M8 11L2 19" stroke={L} strokeWidth="2.500" />],
  [
    "Zoom All",
    false,
    <g key="n">
      <path d="M8 1h5v5h-5zM14 1h5v5h-5zM14 7h5v5h-5z" fill={T} />
      <path d="M9 6A4 4 0 1 1 9 14A4 4 0 1 1 9 6M6 13L2 19" stroke={L} strokeWidth="2" />
    </g>,
  ],
  [
    "Zoom Extents",
    true,
    <g key="n">
      <path d="M1 5V1H5M15 1H19V5M1 15V19H5" stroke={L} strokeWidth="1.500" />
      <path d="M10 3L17 6V14L10 18L3 14V6Z" fill={T} />
      <path d="M3 6L10 10L17 6M10 10V18" stroke={D} />
    </g>,
  ],
  [
    "Zoom Extents All",
    true,
    <g key="n">
      <path d="M12 3L16 1L19 4V13L15 16L12 12Z" fill={T} />
      <path d="M4 7l4 3l-4 3l-4 -3zM9 11l4 3l-4 4l-4 -4z" fill={L} />
      <path d="M15 4V16" stroke={D} />
    </g>,
  ],
  [
    "Zoom Region",
    false,
    <g key="n">
      <path d="M2 12V1H19V14H15" stroke={L} strokeWidth="1.500" strokeDasharray="3 2" />
      <path d="M10 6A4 4 0 1 1 10 14A4 4 0 1 1 10 6M7 13L3 19" stroke={T} strokeWidth="2.500" />
    </g>,
  ],
  [
    "Pan",
    false,
    <path key="n" d="M6 19C4 15 1 12 1 10C3 9 4 11 6 12L4 4C6 2 7 5 8 9V2C9 0 11 0 11 2V9L12 3C14 1 15 3 14 10L16 6C18 5 19 6 18 8C17 12 17 16 14 19Z" fill={L} />,
  ],
  [
    "Orbit",
    true,
    <g key="n">
      <circle cx="9" cy="9" r="7" fill={T} />
      <path d="M9 2V16M2 9H16" stroke={L} strokeWidth="2" />
      <path d="M2 19C8 20 21 10 18 3M5 16C11 15 18 8 18 3" stroke={L} strokeWidth="1.500" />
    </g>,
  ],
  [
    "Maximize Viewport",
    false,
    <g key="n">
      <rect x="1" y="1" width="18" height="18" fill={L} />
      <path d="M10 3H17V10L15 8L9 14L7 12L13 6ZM3 12H8V17H3Z" fill={D} />
    </g>,
  ],
];

function StatusBar() {
  return (
    <div className="flex h-[68px] border-b border-[#9aa4aa] pl-1">
      <div className="mt-[5px] w-[123px] shrink-0">
        <input aria-label="Macro recorder" className="block h-[29px] w-full border-2 border-t-[#777] border-r-white border-b-white border-l-[#aaa] bg-[#dcc4c4]" />
        <input
          aria-label="Listener"
          readOnly
          value="INFO: Iterati"
          className="block h-[29px] w-full border-2 border-t-[#777] border-r-white border-b-white border-l-[#aaa] bg-white px-1 pb-1.5 font-['Liberation_Mono',monospace] text-[15px] text-black"
        />
      </div>
      <div className="mt-1 mr-1 ml-1 h-[62px] w-0.5 bg-[#1c1c1c]" />
      <div className="flex flex-1 flex-col justify-between pt-2 pb-[3px] text-[#ececec]">
        <div className="flex h-6 items-center">
          <p className="flex-1">None Selected</p>
          <button type="button" aria-label="Isolate selection" className="mr-[13px]">
            <Svg size={20} box={20}>
              <path d="M1 5V1H5M15 1H19V5M1 15V19H5M15 19H19V15" stroke="#222" strokeWidth="1.500" />
              <rect x="5" y="5" width="10" height="10" stroke="#222" />
            </Svg>
          </button>
          <button type="button" aria-label="Selection lock" className="mr-[15px]">
            <Svg size={20} box={20}>
              <rect x="4" y="8" width="12" height="11" rx="1" fill="#505050" stroke="#222" />
              <path d="M6 8V5C6 0 14 0 14 5V8" stroke="#222" strokeWidth="1.500" />
              <path d="M9 11h3v5h-3z" fill="#1c1c1c" />
            </Svg>
          </button>
          <button type="button" aria-label="Transform type-in mode" className="mr-[11px]">
            <Svg size={17} box={17}>
              <rect width="17" height="17" fill="#e0e0e0" />
              <circle cx="8.500" cy="8.500" r="3" stroke={D} strokeWidth="2" />
              <path d="M8.500 2V5M8.500 12V15M2 8.500H5M12 8.500H15" stroke={D} strokeWidth="2" />
              <path d="M2 5V2H5M12 2H15V5M2 12V15H5M12 15H15V12" stroke={D} strokeWidth="1.500" />
            </Svg>
          </button>
          <div className="flex gap-4">
            <Coord axis="X" value="946,027mm" />
            <Coord axis="Y" value="107,212mm" />
            <Coord axis="Z" value="0,0mm" />
          </div>
          <p className="ml-[18px] w-[133px]">Grid = 100,0mm</p>
        </div>
        <div className="flex h-[26px] items-center">
          <p className="flex-1">Click or click-and-drag to select objects</p>
          <button type="button" aria-label="Adaptive degradation" className="flex h-[25px] w-7 items-center justify-center rounded-sm border-l border-black bg-[#5b82bb]">
            <Svg size={16} box={16}>
              <path d="M8 1L14 4V12L8 15L2 12V4ZM2 4L8 7L14 4M8 7V15" stroke="#1d2a42" strokeWidth="2.500" />
              <path d="M8 1L14 4V12L8 15L2 12V4ZM2 4L8 7L14 4M8 7V15" stroke="#b9c8e0" />
            </Svg>
          </button>
          <button type="button" className="ml-1.5 w-[130px] text-left">
            Add Time Tag
          </button>
        </div>
      </div>
      <div className="mr-[19px] flex shrink-0 flex-col gap-[3px] pt-[7px]">
        <div className="flex">
          <PlayButton label="Go to start" d="M1 3h2v14h-2zM11 4v12l-7 -6zM19 4v12l-7 -6z" />
          <PlayButton label="Previous key" d="M9 4v12l-8 -6zM11 3h3v14h-3zM16 3h3v14h-3z" />
          <PlayButton label="Play" d="M3 1L19 10L3 19Z" more />
          <PlayButton label="Next key" d="M11 4v12l8 -6zM1 3h3v14h-3zM6 3h3v14h-3z" />
          <PlayButton label="Go to end" d="M17 3h2v14h-2zM9 4v12l7 -6zM1 4v12l7 -6z" />
        </div>
        <div className="flex items-center">
          <PlayButton label="Key mode" d="M8 5v10l-7 -5zM12 5v10l7 -5z" />
          <div className="relative flex items-center">
            <input aria-label="Current frame" defaultValue="0" className="h-[22px] w-[86px] border-x-2 border-[#2a2a2a] bg-[#646464] px-1 text-[#dcdcdc] outline-none" />
            <span className="absolute right-1 flex flex-col gap-1">
              <span className="border-x-[3px] border-b-[5px] border-x-transparent border-b-[#e0e0e0]" />
              <span className="border-x-[3px] border-t-[5px] border-x-transparent border-t-[#e0e0e0]" />
            </span>
          </div>
          <button type="button" aria-label="Time configuration" className="ml-2.5">
            <Svg size={20} box={20}>
              <circle cx="8" cy="8" r="7.500" fill={L} />
              <path d="M8 3V9H12" stroke={D} strokeWidth="1.500" />
              <circle cx="14" cy="14" r="3.500" fill="#6e3c10" stroke={O} strokeWidth="2.500" />
              <circle cx="14" cy="14" r="5" stroke={O} strokeDasharray="2 1.500" />
            </Svg>
          </button>
        </div>
      </div>
      <button type="button" aria-label="Set keys" className="mt-[7px] mr-1.5 flex h-[54px] w-[52px] shrink-0 items-center justify-center rounded-md bg-[#626262]">
        <Svg size={36} box={36}>
          <path d="M15 2H21V14H32V21H21V32H15V21H2V14H15Z" fill={L} stroke={D} />
          <circle cx="23" cy="28" r="4" stroke={D} strokeWidth="5" />
          <path d="M26 25L35 18" stroke={D} strokeWidth="5" />
          <circle cx="23" cy="28" r="4" stroke={T} strokeWidth="3" />
          <path d="M26 25L35 18M30 22L33 25M33 20L35 22" stroke={T} strokeWidth="2.500" />
        </Svg>
      </button>
      <div className="mt-[7px] mr-1 flex w-[58px] shrink-0 flex-col gap-0.5 text-[#dcdcdc]">
        <button type="button" className="h-[26px] rounded-sm bg-[#5d5d5d]">
          Auto
        </button>
        <button type="button" className="h-[26px] rounded-sm bg-[#5d5d5d]">
          Set K.
        </button>
      </div>
      <div className="mt-[7px] mr-2.5 flex w-[144px] shrink-0 flex-col gap-[5px] text-[#dcdcdc]">
        <Dropdown label="Key set" value="Selected" className="h-[22px] bg-[#606060]" />
        <div className="flex gap-1">
          <button type="button" aria-label="Tangent type" className="relative flex h-6 w-[27px] items-center justify-center">
            <Svg size={20} box={20}>
              <path d="M1 19C6 17 6 10 6 4H14C14 10 14 17 19 19" stroke={T} strokeWidth="2.500" />
              <path d="M0 2h4v4h-4zM16 2h4v4h-4zM8 1h5v5h-5z" fill={L} />
              <path d="M10 3h2v2h-2z" fill={D} />
            </Svg>
            <Corner />
          </button>
          <button type="button" className="h-[26px] w-[110px] rounded-sm bg-[#5d5d5d]">
            Filters...
          </button>
        </div>
      </div>
      <div className="mt-[7px] mr-[15px] grid shrink-0 grid-cols-[28px_28px_28px_28px] content-start gap-y-1">
        {navIcons.map(([name, more, icon]) => (
          <button key={name} type="button" aria-label={name} className="relative flex h-6 items-center justify-center">
            <Svg size={19} box={20}>
              {icon}
            </Svg>
            {more && <Corner />}
          </button>
        ))}
      </div>
    </div>
  );
}

const apps: [string, React.ReactNode][] = [
  [
    "Task view",
    <g key="a">
      <rect x="1" y="10" width="20" height="20" rx="1" fill="#2d2d2d" />
      <path d="M8 10h13v13h-13z" fill="#a4a7a8" />
      <rect x="8" y="3" width="21" height="20" rx="1" fill="#f4f6f7" opacity="0.700" />
    </g>,
  ],
  [
    "Chat",
    <g key="a">
      <path d="M16 2A14 14 0 1 1 9 28L2 30L4 23A14 14 0 0 1 16 2Z" fill="#6a63bd" />
      <rect x="8" y="10" width="12" height="11" rx="2" fill="#fff" />
      <path d="M21 14L25 11V20L21 17Z" fill="#fff" />
    </g>,
  ],
  [
    "Edge",
    <g key="a">
      <path d="M1 16C2 -2 31 -2 31 13C31 21 20 22 19 18C22 14 18 9 13 9C7 9 3 12 1 16Z" fill="#36c2b4" />
      <path d="M1 15C4 8 14 6 18 12C12 11 9 18 13 23C17 28 25 27 28 24C20 36 2 32 1 15Z" fill="#1477c8" />
      <path d="M12 13C8 18 10 27 20 30C11 32 6 24 8 17C9 15 10 13 12 13Z" fill="#0c4f9c" />
      <path d="M20 3C28 4 32 10 31 14C29 21 21 21 19 18C24 13 22 6 14 4Z" fill="#5bd17c" />
    </g>,
  ],
  [
    "Explorer",
    <g key="a">
      <path d="M1 3H12L15 6H31V29H1Z" fill="#e0a21e" />
      <rect x="1" y="8" width="30" height="21" rx="1" fill="#fbd056" />
      <path d="M6 29V24C6 22 7 21 9 21H23C25 21 26 22 26 24V29Z" fill="#1d72b8" />
      <path d="M10 25H22" stroke="#0d4a85" strokeWidth="2" />
    </g>,
  ],
  [
    "Store",
    <g key="a">
      <path d="M10 7V2H22V7" stroke="#2d9fd8" strokeWidth="2" />
      <path d="M1 7H31V26C31 29 29 30 27 30H5C3 30 1 29 1 26Z" fill="#163f6d" />
      <path d="M10 12h5v5h-5z" fill="#e8663c" />
      <path d="M17 12h5v5h-5z" fill="#86b84a" />
      <path d="M10 19h5v5h-5z" fill="#42a5de" />
      <path d="M17 19h5v5h-5z" fill="#f1c43c" />
    </g>,
  ],
  [
    "Mail",
    <g key="a">
      <path d="M1 12L16 2L31 12V20H1Z" fill="#12579c" />
      <path d="M3 11H29L16 22Z" fill="#f4f8fb" />
      <path d="M1 12L16 22L31 12V30H1Z" fill="#2d9fe0" />
      <path d="M1 30L16 20L31 30Z" fill="#48b8ee" />
    </g>,
  ],
  [
    "Chrome",
    <g key="a">
      <circle cx="16" cy="16" r="15" fill="#f5c63a" />
      <path d="M16 16L3 8.500A15 15 0 0 1 29 8.500H16Z" fill="#de4a3b" />
      <path d="M3 8.500A15 15 0 0 0 16 31L22.500 19.500L10 19.500Z" fill="#3f9e50" />
      <circle cx="16" cy="16" r="7.500" fill="#fff" />
      <circle cx="16" cy="16" r="6" fill="#3f74dc" />
    </g>,
  ],
  [
    "3ds Max",
    <g key="a">
      <rect x="2" y="1" width="28" height="30" fill="#cfe8e8" />
      <path d="M10 5H20L15 12C23 12 22 22 14 22C11 22 10 21 9 20" stroke="#16787c" strokeWidth="4.500" />
      <path d="M17 28H29" stroke="#2a9c9c" strokeWidth="3" strokeDasharray="3 1" />
    </g>,
  ],
];

function Taskbar() {
  return (
    <footer className="flex h-[60px] items-center bg-linear-to-r from-[#d5ebf6] via-[#d8e9f2] to-[#d2e6ef] font-['Open_Sans','Noto_Sans',sans-serif] text-sm text-[#1d1d1d]">
      <div className="flex flex-1 items-center pl-6">
        <Svg size={32} box={32}>
          <circle cx="15" cy="13" r="10" stroke="#f0b04e" strokeWidth="3" />
          <path d="M9 24H21L18 29H12Z" fill="#d9763a" />
          <path d="M7 25C-1 24 1 14 8 15C10 7 20 7 22 15C31 14 32 25 24 25Z" fill="#cdd5e0" />
        </Svg>
        <div className="ml-2 leading-5">
          <p>16°C</p>
          <p className="text-[#4f5a60]">Smoke</p>
        </div>
      </div>
      <div className="ml-3.5 flex items-center">
        <button type="button" aria-label="Start" className="mr-[17px]">
          <Svg size={30} box={30}>
            <path d="M0 0h14v14h-14zM16 0h14v14h-14z" fill="#2fb1ea" />
            <path d="M0 16h14v14h-14zM16 16h14v14h-14z" fill="#1286d4" />
          </Svg>
        </button>
        <button type="button" className="mr-[7px] flex h-[38px] w-[122px] items-center justify-center gap-1.5 rounded-full bg-[#f5fafd] shadow-sm">
          <Svg size={18} box={18}>
            <circle cx="8" cy="7" r="5.500" stroke="#222" strokeWidth="1.800" />
            <path d="M12 11L17 17" stroke="#222" strokeWidth="1.800" />
          </Svg>
          Поиск
        </button>
        {apps.map(([name, icon]) => (
          <button
            key={name}
            type="button"
            aria-label={name}
            className={clsx("relative mx-[3px] flex h-12 w-[49px] items-center justify-center rounded-md", name === "3ds Max" && "bg-[#eef6fa]")}
          >
            <Svg size={30} box={32}>
              {icon}
            </Svg>
            {name === "Chrome" && <span className="absolute bottom-0 h-1 w-2 rounded-full bg-[#7d8890]" />}
            {name === "3ds Max" && <span className="absolute bottom-0 h-1 w-5 rounded-full bg-[#1d6fb0]" />}
          </button>
        ))}
      </div>
      <div className="flex flex-1 items-center justify-end pr-6">
        <button type="button" aria-label="Hidden icons" className="mr-3.5">
          <Svg size={16} box={16}>
            <path d="M1 12L8 5L15 12" stroke="#1d1d1d" strokeWidth="1.500" />
          </Svg>
        </button>
        <Svg size={20} box={20}>
          <path d="M5 16C0 16 0 9 5 9C6 3 14 3 15 9C20 9 20 16 15 16Z" fill="#9aa3a8" stroke="#222" strokeWidth="1.500" />
          <path d="M3 2L18 18" stroke="#222" strokeWidth="1.500" />
        </Svg>
        <span className="mr-[22px] ml-[18px]">ENG</span>
        <div className="flex gap-2.5">
          <Svg size={20} box={20}>
            <path d="M1 8C6 2 14 2 19 8M4 11C7 7 13 7 16 11M7 14C9 12 11 12 13 14" stroke="#1d1d1d" strokeWidth="1.500" />
            <circle cx="10" cy="16" r="1.500" fill="#1d1d1d" />
          </Svg>
          <Svg size={20} box={20}>
            <path d="M1 8H4L9 4V16L4 12H1Z" stroke="#1d1d1d" strokeWidth="1.500" />
            <path d="M11 7C13 9 13 11 11 13" stroke="#1d1d1d" strokeWidth="1.500" />
            <path d="M14 5C17 8 17 12 14 15M16 3C20 8 20 12 16 17" stroke="#a8b4ba" />
          </Svg>
          <Svg size={20} box={20}>
            <rect x="3" y="5" width="14" height="11" rx="2" stroke="#1d1d1d" strokeWidth="1.500" />
            <path d="M5 7h10v7h-10zM18 8h2v5h-2z" fill="#1d1d1d" />
            <path d="M3 1L0 7H3L1 12L7 5H4L6 1Z" fill="#1d1d1d" stroke="#d5e8f0" strokeWidth="0.800" />
          </Svg>
        </div>
        <div className="ml-[21px] text-right leading-5">
          <p>19:00</p>
          <p>09.03.2023</p>
        </div>
      </div>
    </footer>
  );
}

export default function App() {
  return (
    <div className="flex min-h-screen flex-col bg-[#444] font-['Noto_Sans',sans-serif] text-[13px] leading-5">
      <TitleBar />
      <MenuBar />
      <Toolbar />
      <main className="flex flex-1">
        <SideBars />
        <div className="flex min-w-0 flex-1 flex-col">
          <Ribbon />
          <div className="flex flex-1">
            <Viewport />
            <CommandPanel />
          </div>
          <TimeTrack />
        </div>
      </main>
      <StatusBar />
      <Taskbar />
    </div>
  );
}
